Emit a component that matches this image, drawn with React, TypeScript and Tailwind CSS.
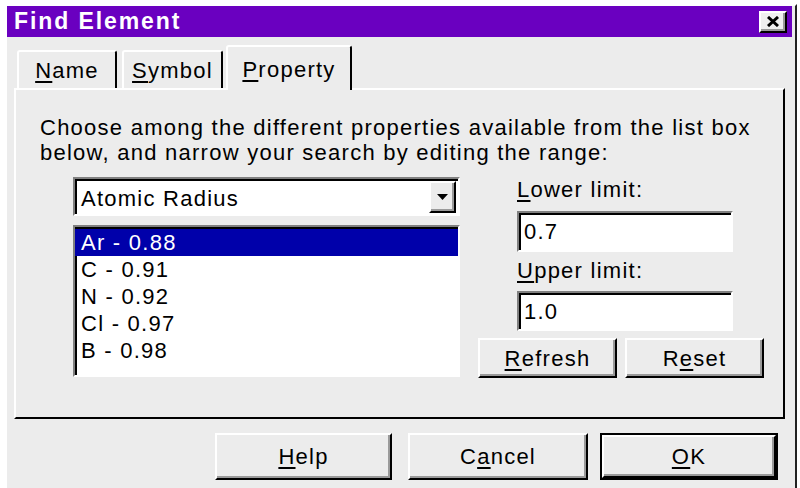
import React from "react"

const raised =
  "border-2 border-t-white border-l-white border-r-black border-b-black shadow-[inset_-2px_-2px_0_#9a9a9a]"
const sunken =
  "border-2 border-t-[#808080] border-l-[#808080] border-r-white border-b-white shadow-[inset_2px_2px_0_#000]"

function Key({ children }: { children: React.ReactNode }) {
  return <span className="underline decoration-[2px] underline-offset-[3px]">{children}</span>
}

function Tab({ children, active, w }: { children: React.ReactNode; active?: boolean; w: string }) {
  if (active) {
    return (
      <div
        className={`relative z-10 -mb-[2px] flex h-[45px] items-center justify-center rounded-t-[3px] border-2 border-b-0 border-t-white border-l-white border-r-black bg-[#ececec] pt-[2px] ${w}`}
      >
        {children}
      </div>
    )
  }
  return (
    <div
      className={`flex h-[38px] items-center justify-center rounded-t-[3px] border-2 border-b-0 border-t-white border-l-white border-r-black ${w}`}
    >
      {children}
    </div>
  )
}

function Button({ children, w, def }: { children: React.ReactNode; w: string; def?: boolean }) {
  const inner = (
    <div className={`flex h-full w-full items-center justify-center bg-[#ececec] ${raised}`}>{children}</div>
  )
  if (def) {
    return <div className={`h-[47px] border-2 border-black ${w}`}>{inner}</div>
  }
  return <div className={`h-[47px] ${w}`}>{inner}</div>
}

export default function App() {
  const rows = ["Ar - 0.88", "C - 0.91", "N - 0.92", "Cl - 0.97", "B - 0.98"]
  return (
    <div className="h-[488px] w-[800px] overflow-hidden bg-white pt-[4px] pl-[5px] font-['Liberation_Sans',Arial,sans-serif] text-[22px] leading-[25px] tracking-[1.25px] text-black">
      <div className="flex h-[500px] w-[792px] flex-col border-l-2 border-t-2 border-r-2 border-l-white border-t-white border-r-[#222] bg-[#ececec]">
        {/* title bar */}
        <div className="mr-[3px] flex h-[31px] items-center justify-between bg-[#6a00c0] pl-[7px] pr-[5px]">
          <span className="text-[23px] font-bold tracking-[1.9px] text-white">Find Element</span>
          <div className={`flex h-[22px] w-[28px] items-center justify-center bg-[#f0f0f0] ${raised}`}>
            <svg width="14" height="11" viewBox="0 0 14 11">
              <path d="M2 1 L12 10 M12 1 L2 10" stroke="#000" strokeWidth="3" />
            </svg>
          </div>
        </div>

        {/* tabs */}
        <div className="flex h-[51px] items-end pl-[10px]">
          <Tab w="w-[100px]">
            <span>
              <Key>N</Key>ame
            </span>
          </Tab>
          <div className="w-[5px]" />
          <Tab w="w-[101px]">
            <span>
              <Key>S</Key>ymbol
            </span>
          </Tab>
          <div className="w-[3px]" />
          <Tab active w="w-[126px]">
            <span>
              <Key>P</Key>roperty
            </span>
          </Tab>
        </div>

        {/* panel */}
        <div className="ml-[7px] h-[331px] w-[771px] border-2 border-t-white border-l-white border-r-black border-b-black pt-[25px] pl-[24px]">
          <p>
            Choose among the different properties available from the list box
            <br />
            below, and narrow your search by editing the range:
          </p>

          <div className="mt-[12px] flex gap-[18px] pl-[33px]">
            <div className="flex w-[387px] flex-col gap-[9px]">
              <div className={`flex h-[39px] items-center justify-between bg-white pl-[6px] pr-[2px] ${sunken}`}>
                <span className="pt-[3px]">Atomic Radius</span>
                <div className={`flex h-[32px] w-[27px] items-center justify-center bg-[#ececec] ${raised}`}>
                  <svg width="11" height="6" viewBox="0 0 11 6">
                    <path d="M0 0 H11 L5.5 6 Z" fill="#000" />
                  </svg>
                </div>
              </div>
              <div className={`h-[152px] bg-white ${sunken} pt-[2px]`}>
                {rows.map((r, i) => (
                  <div
                    key={r}
                    className={`h-[27px] pl-[6px] leading-[27px] ${i === 0 ? "bg-[#0000aa] text-white" : ""}`}
                  >
                    {r}
                  </div>
                ))}
              </div>
            </div>

            <div className="flex w-[286px] flex-col">
              <div className="pl-[39px]">
                <span>
                  <Key>L</Key>ower limit:
                </span>
                <div className={`mt-[9px] flex h-[41px] w-[216px] items-center bg-white pl-[5px] ${sunken}`}>0.7</div>
                <div className="mt-[6px]">
                  <Key>U</Key>pper limit:
                </div>
                <div className={`mt-[8px] flex h-[40px] w-[216px] items-center bg-white pl-[5px] ${sunken}`}>1.0</div>
              </div>
              <div className="mt-[7px] flex gap-[8px]">
                <div className={`flex h-[40px] w-[139px] items-center justify-center ${raised}`}>
                  <span>
                    <Key>R</Key>efresh
                  </span>
                </div>
                <div className={`flex h-[40px] w-[139px] items-center justify-center ${raised}`}>
                  <span>
                    R<Key>e</Key>set
                  </span>
                </div>
              </div>
            </div>
          </div>
        </div>

        {/* bottom buttons */}
        <div className="mt-[14px] flex pl-[208px]">
          <Button w="w-[177px]">
            <span>
              <Key>H</Key>elp
            </span>
          </Button>
          <div className="w-[16px]" />
          <Button w="w-[180px]">
            <span>
              C<Key>a</Key>ncel
            </span>
          </Button>
          <div className="w-[12px]" />
          <Button w="w-[178px]" def>
            <span>
              <Key>O</Key>K
            </span>
          </Button>
        </div>
      </div>
    </div>
  )
}
